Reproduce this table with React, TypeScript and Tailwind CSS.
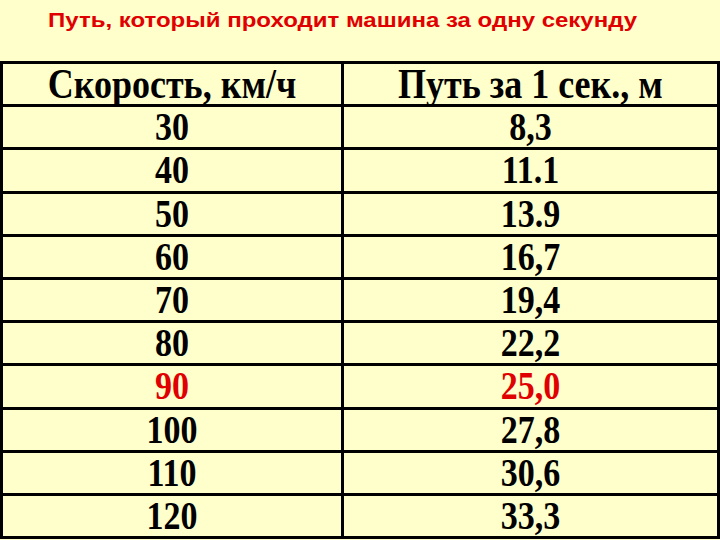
import React from "react";

const rows: [string, string, boolean][] = [
  ["30", "8,3", false],
  ["40", "11.1", false],
  ["50", "13.9", false],
  ["60", "16,7", false],
  ["70", "19,4", false],
  ["80", "22,2", false],
  ["90", "25,0", true],
  ["100", "27,8", false],
  ["110", "30,6", false],
  ["120", "33,3", false],
];

function Cell({ children, red, head }: { children: React.ReactNode; red?: boolean; head?: boolean }) {
  return (
    <td
      className={`border-[3px] border-black text-center leading-none p-0 ${red ? "text-[#e00000]" : "text-black"} ${
        head ? "text-[36px]" : "text-[34px]"
      }`}
    >
      <span className="inline-block scale-y-[1.17] leading-none">{children}</span>
    </td>
  );
}

export default function App() {
  return (
    <div className="w-[720px] h-[540px] bg-[#ffffcc] overflow-hidden flex flex-col">
      <div className="h-[61px] pl-[48px] pt-[8px]">
        <div className="inline-block origin-left scale-x-[1.2] text-[20px] font-bold text-[#e00000] font-['Liberation_Sans',Arial,sans-serif] leading-[24px] whitespace-nowrap">
          Путь, который проходит машина за одну секунду
        </div>
      </div>
      <table className="w-[720px] border-collapse border-[3px] border-black font-['Liberation_Serif','Times_New_Roman',serif] font-bold">
        <colgroup>
          <col className="w-[342px]" />
          <col className="w-[378px]" />
        </colgroup>
        <tbody>
          <tr className="h-[43.2px]">
            <Cell head>Скорость, км/ч</Cell>
            <Cell head>Путь за 1 сек., м</Cell>
          </tr>
          {rows.map(([a, b, red]) => (
            <tr key={a} className="h-[43.2px]">
              <Cell red={red}>{a}</Cell>
              <Cell red={red}>{b}</Cell>
            </tr>
          ))}
        </tbody>
      </table>
    </div>
  );
}
